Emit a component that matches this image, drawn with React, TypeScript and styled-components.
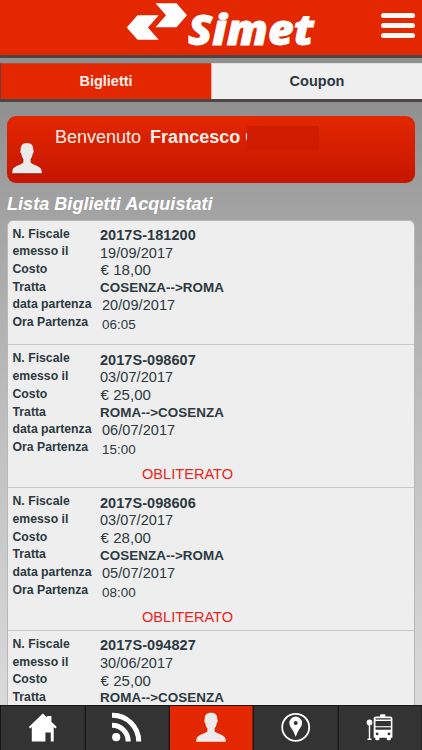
import React from "react";
import styled, { createGlobalStyle } from "styled-components";

const GlobalStyle = createGlobalStyle`
  * { box-sizing: border-box; }
  body { margin: 0; font-family: "Liberation Sans", Arial, sans-serif; color: #2c3940; }
`;

const Screen = styled.div`
  width: 422px;
  height: 750px;
  overflow: hidden;
  display: flex;
  flex-direction: column;
  background: linear-gradient(#8e8e8e 0, #919191 110px, #a4a4a4 220px, #bcbcbc 400px, #dadada 705px);
`;

const Header = styled.header`
  height: 58px;
  flex: none;
  display: flex;
  justify-content: space-between;
  background: #e32700;
  border-bottom: 3px solid #4c4545;
`;

const Logo = styled.svg`
  width: 200px;
  height: 55px;
  margin-left: 122px;
`;

const MenuButton = styled.button`
  width: 40px;
  height: 32px;
  margin: 10px 4px 0 0;
  padding: 3px;
  border: 0;
  background: none;
  display: flex;
  flex-direction: column;
  gap: 4.6px;
`;

const MenuBar = styled.span`
  height: 5.4px;
  flex: none;
  border-radius: 3px;
  background: #fff8f4;
`;

const Tabs = styled.div`
  height: 39px;
  flex: none;
  margin-top: 5px;
  display: grid;
  grid-template-columns: 211px 211px;
  border-bottom: 3px solid #4b4545;
`;

const Tab = styled.div<{ $active?: boolean }>`
  font-size: 14.5px;
  font-weight: bold;
  line-height: 35px;
  text-align: center;
  border-top: 1px solid ${(p) => (p.$active ? "#b54d38" : "#dedede")};
  border-left: 1px solid ${(p) => (p.$active ? "#6d3b42" : "#ffaaa0")};
  color: ${(p) => (p.$active ? "#fff0ec" : "#2c3940")};
  background: ${(p) => (p.$active ? "#e32700" : "#efefef")};
`;

const Welcome = styled.section`
  height: 67px;
  flex: none;
  margin: 14px 7px 0;
  border-radius: 9px;
  background: linear-gradient(#e32700, #c51500);
  display: flex;
  color: #ffede8;
`;

const Avatar = styled.svg`
  width: 30px;
  height: 32px;
  margin: 27px 0 0 5px;
`;

const Greeting = styled.div`
  margin: 10px 0 0 13px;
  height: 24px;
  display: flex;
  font-size: 18px;
  line-height: 22px;
  white-space: nowrap;
`;

const Name = styled.strong`
  margin-left: 9px;
  width: 97px;
  overflow: hidden;
  letter-spacing: 0.02px;
`;

const HiddenSurname = styled.span`
  width: 72px;
  height: 24px;
  background: #cf1c00;
`;

const Title = styled.h1`
  height: 37px;
  flex: none;
  margin: 0;
  padding: 10px 7px 0;
  font-size: 18px;
  line-height: 22px;
  letter-spacing: 0.05px;
  font-style: italic;
  color: #fff;
`;

const TicketList = styled.main`
  flex: 1;
  min-height: 0;
  overflow: hidden;
  margin: 0 7px;
  border: 1px solid #b8b8b8;
  border-bottom: 0;
  border-radius: 6px 6px 0 0;
  background: #eee;
`;

const Ticket = styled.article<{ $used?: boolean }>`
  height: ${(p) => (p.$used ? 142.8 : 124.2)}px;
  padding: ${(p) => (p.$used ? 4.3 : 3.6)}px 0 0 4.5px;
  border-bottom: 1px solid #c8c8c8;
`;

const Field = styled.div`
  height: 17.7px;
  display: grid;
  grid-template-columns: 87.5px 1fr;
`;

const Label = styled.span`
  font-size: 12.25px;
  font-weight: bold;
  line-height: 18px;
  white-space: nowrap;
`;

const Value = styled.span<{ $size: number; $bold?: boolean; $indent?: number; $drop?: number }>`
  font-size: ${(p) => p.$size}px;
  font-weight: ${(p) => (p.$bold ? "bold" : "normal")};
  line-height: 18px;
  padding-left: ${(p) => p.$indent ?? 0}px;
  padding-top: ${(p) => p.$drop ?? 1.3}px;
  letter-spacing: 0.06px;
  white-space: nowrap;
`;

const Status = styled.div`
  margin: 9.2px 0 0 129.5px;
  font-size: 14.6px;
  line-height: 18px;
  color: #e8251c;
`;

const Nav = styled.nav`
  height: 45px;
  flex: none;
  display: grid;
  grid-template-columns: 84.5px 84px 84.5px 84.5px 84.5px;
  border-top: 1px solid #171717;
  background: #171717;
`;

const NavItem = styled.div<{ $active?: boolean }>`
  border-left: 1px solid #171717;
  border-right: 1px solid ${(p) => (p.$active ? "#8d1c05" : "#272727")};
  background: ${(p) => (p.$active ? "#e32700" : "#333")};
  display: flex;
  justify-content: center;
`;

const NavIcon = styled.svg`
  width: 32px;
  height: 32px;
  margin-top: 6px;
`;

const PERSON =
  "M15 0C10.5 0 8.4 2.8 8.7 7.2C8 7.5 8.3 10.1 9.3 10.8C9.7 13.6 10.5 15 11.4 16.2V19.3C10.9 21.2 2.3 23 .9 26C.3 27.3 .2 28.7 .2 30.2H29.8C29.8 28.7 29.7 27.3 29.1 26C27.7 23 19.1 21.2 18.6 19.3V16.2C19.5 15 20.3 13.6 20.7 10.8C21.7 10.1 22 7.5 21.3 7.2C21.6 2.8 19.5 0 15 0Z";

type TicketData = { id: string; issued: string; cost: string; route: string; date: string; time: string; used?: boolean };

const tickets: TicketData[] = [
  { id: "2017S-181200", issued: "19/09/2017", cost: "€ 18,00", route: "COSENZA-->ROMA", date: "20/09/2017", time: "06:05" },
  { id: "2017S-098607", issued: "03/07/2017", cost: "€ 25,00", route: "ROMA-->COSENZA", date: "06/07/2017", time: "15:00", used: true },
  { id: "2017S-098606", issued: "03/07/2017", cost: "€ 28,00", route: "COSENZA-->ROMA", date: "05/07/2017", time: "08:00", used: true },
  { id: "2017S-094827", issued: "30/06/2017", cost: "€ 25,00", route: "ROMA-->COSENZA", date: "", time: "", used: true },
];

function TicketCard({ t }: { t: TicketData }) {
  return (
    <Ticket $used={t.used}>
      <Field><Label>N. Fiscale</Label><Value $size={14.5} $bold>{t.id}</Value></Field>
      <Field><Label>emesso il</Label><Value $size={14.5}>{t.issued}</Value></Field>
      <Field><Label>Costo</Label><Value $size={15} $indent={0.5}>{t.cost}</Value></Field>
      <Field><Label>Tratta</Label><Value $size={13.4} $bold>{t.route}</Value></Field>
      {t.date && (
        <>
          <Field><Label>data partenza</Label><Value $size={14.5} $indent={2} $drop={1}>{t.date}</Value></Field>
          <Field><Label>Ora Partenza</Label><Value $size={13.4} $indent={2} $drop={3}>{t.time}</Value></Field>
          {t.used && <Status>OBLITERATO</Status>}
        </>
      )}
    </Ticket>
  );
}

export default function App() {
  return (
    <>
      <GlobalStyle />
      <Screen>
        <Header>
          <Logo viewBox="122 0 200 55" fill="#fff">
            <path d="M126.7 27.5L137.5 15.3H158.7L148 27.5L158.7 39.8H137.5Z" />
            <path d="M155.5 3.3H176.5L187 15.3L176.5 27.3H155.5L166 15.3Z" />
            <text x="188" y="45.4" fontFamily="Open Sans" fontSize="42" fontWeight="800" fontStyle="italic" stroke="#fff" strokeWidth="0.8" textLength="126" lengthAdjust="spacingAndGlyphs">Simet</text>
          </Logo>
          <MenuButton aria-label="Menu"><MenuBar /><MenuBar /><MenuBar /></MenuButton>
        </Header>
        <Tabs>
          <Tab $active>Biglietti</Tab>
          <Tab>Coupon</Tab>
        </Tabs>
        <Welcome>
          <Avatar viewBox="0 0 30 32" preserveAspectRatio="none">
            <path d={PERSON} fill="#82150a" opacity=".45" transform="translate(0 1.5)" />
            <path d={PERSON} fill="#ebebeb" />
          </Avatar>
          <Greeting>Benvenuto<Name>Francesco G</Name><HiddenSurname /></Greeting>
        </Welcome>
        <Title>Lista Biglietti Acquistati</Title>
        <TicketList>
          {tickets.map((t) => <TicketCard key={t.id} t={t} />)}
        </TicketList>
        <Nav>
          <NavItem>
            <NavIcon viewBox="-0.8 0 32 32">
              <path fill="#fff" fillRule="evenodd" d="M16 1.5L20.3 5.5V4H24.6V9.7L30 15L28.5 16.4L26.9 15V29.5H24V20.5H18.6V29.5H5V15L3.5 16.4L2 15Z" />
            </NavIcon>
          </NavItem>
          <NavItem>
            <NavIcon viewBox="0 0 32 32">
              <circle cx="5.2" cy="25.2" r="4.1" fill="#fff" />
              <path d="M1 13.3A16.2 16.2 0 0 1 17.2 29.5M1 3.3A26.2 26.2 0 0 1 27.7 29.5" fill="none" stroke="#fff" strokeWidth="5.1" />
            </NavIcon>
          </NavItem>
          <NavItem $active>
            <NavIcon viewBox="-1 -.3 32 32"><path d={PERSON} fill="#ebebeb" transform="translate(0 .5) scale(1 .96)" /></NavIcon>
          </NavItem>
          <NavItem>
            <NavIcon viewBox="-0.7 -0.3 32 32">
              <circle cx="16" cy="15" r="13.5" fill="none" stroke="#fff" strokeWidth="1.8" />
              <path fill="#fff" fillRule="evenodd" d="M16 4.3A6.4 6.4 0 0 0 9.6 10.7C9.6 14 12 16 13.7 19.2C14.7 21 15.2 22.8 16 24.8C16.8 22.8 17.3 21 18.3 19.2C20 16 22.4 14 22.4 10.7A6.4 6.4 0 0 0 16 4.3ZM16 8.7A2 2 0 1 1 16 12.7A2 2 0 0 1 16 8.7Z" />
            </NavIcon>
          </NavItem>
          <NavItem>
            <NavIcon viewBox="0 0 32 32" fill="#fff">
              <circle cx="5.5" cy="10.5" r="2.9" />
              <path d="M4.8 13H6.2V26.6H7.5V28H3.5V26.6H4.8Z" />
              <path fillRule="evenodd" d="M12 4.5H16V3C16 2.5 16.4 2.2 17 2.2H20.5C21.1 2.2 21.4 2.5 21.4 3V4.5H26C27.5 4.5 28.4 5.4 28.4 6.8V25.7H26.8V27.2C26.8 28.5 22.7 28.5 22.7 27.2V25.7H15.4V27.2C15.4 28.5 11.3 28.5 11.3 27.2V25.7H9.7V6.8C9.7 5.4 10.5 4.5 12 4.5ZM11.7 6.3V7.6H26.6V6.3ZM11.5 9V17.7H26.8V9ZM13.1 20.5A1.4 1.4 0 1 0 13.1 23.3A1.4 1.4 0 1 0 13.1 20.5ZM25 20.5A1.4 1.4 0 1 0 25 23.3A1.4 1.4 0 1 0 25 20.5Z" />
              <path d="M11 14.2H27V15.3H11Z" />
            </NavIcon>
          </NavItem>
        </Nav>
      </Screen>
    </>
  );
}
